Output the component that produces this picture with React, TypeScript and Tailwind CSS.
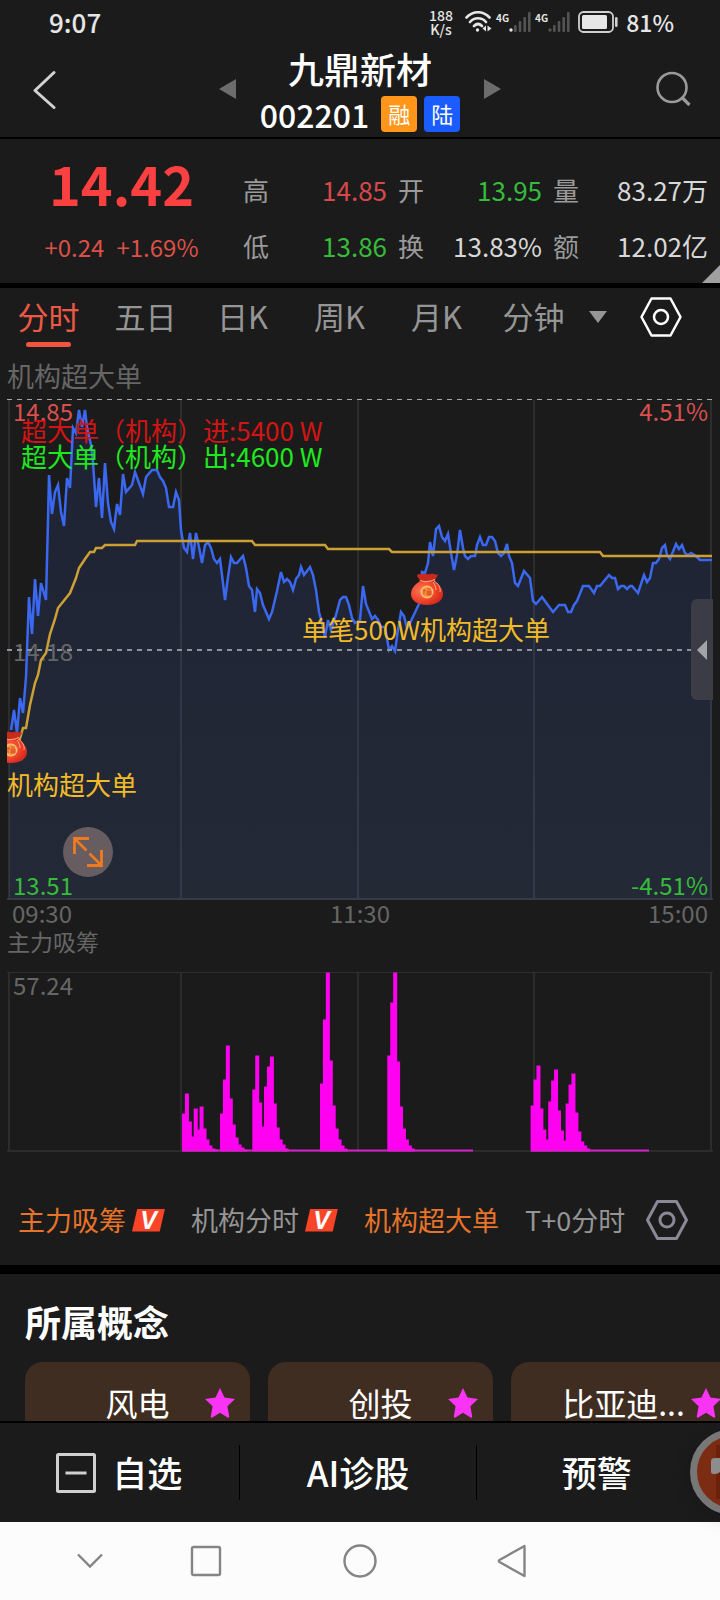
import React from "react";

const PRICE_LINE =
  "11,730 14,710 17,733 20,698 23,713 26,677 29,597 32,634 35,579 38,616 41,583 46,600 48,520 49,475 52,514 55,492 58,485 61,512 64,526 67,478 70,488 73,428 76,433 79,410 82,427 85,410 87,427 91,445 93,462 96,507 99,478 102,518 105,463 108,503 111,522 114,529 117,504 120,515 123,474 126,492 132,485 135,472 143,494 146,477 152,470 157,470 160,477 163,481 166,488 169,507 173,507 176,492 179,500 181,530 184,548 187,552 190,533 193,559 196,533 199,547 202,563 205,545 208,542 211,548 214,559 217,563 220,559 222,575 225,600 228,577 231,557 234,563 237,563 243,556 246,568 249,586 252,590 255,612 257,589 260,593 263,605 269,619 272,612 277,591 281,572 284,582 287,579 290,582 293,590 296,579 299,575 301,567 304,575 310,567 313,575 316,590 319,612 322,623 325,637 328,620 331,630 336,615 340,600 343,597 346,597 349,605 352,618 355,623 360,620 363,586 366,604 372,619 375,616 378,620 381,627 385,627 389,650 392,646 395,651 398,630 401,612 404,616 407,628 410,623 419,604 422,572 425,573 428,563 430,542 433,556 436,529 439,526 442,537 445,541 448,534 451,553 454,570 457,555 460,530 463,548 465,556 468,559 471,556 475,556 477,545 480,537 483,545 486,545 489,537 492,537 495,541 498,553 501,556 504,553 507,544 509,556 512,563 515,583 518,586 524,571 530,578 533,601 536,604 542,597 553,612 559,605 565,605 568,612 571,612 574,605 577,601 583,586 589,586 594,593 597,586 600,586 609,575 612,578 615,578 618,589 621,586 624,586 627,589 630,586 632,586 638,593 644,575 647,582 650,578 653,563 656,563 659,559 662,548 665,545 667,555 670,559 676,544 679,549 682,545 685,553 688,555 691,553 696,556 700,560 712,560";

const AVERAGE_LINE =
  "19,742 21,735 23,728 26,728 30,705 35,683 38,675 41,660 46,653 50,634 55,619 58,608 70,593 76,578 79,568 85,559 90,552 94,552 96,548 102,548 105,545 135,545 137,541 252,541 255,545 325,545 328,549 389,549 392,552 600,552 603,556 712,556";

const GRID_X = [9, 181, 358, 534, 711];

const BAR_STEP = 2.93;
const BAR_GROUPS = [
  { x: 182, heights: [38, 58, 30, 15, 43, 22, 45, 23, 12, 6, 3, 2] },
  { x: 220, heights: [38, 72, 106, 53, 27, 14, 7, 4, 2] },
  { x: 252.3, heights: [62, 96, 49, 25, 65, 85, 95, 48, 24, 12, 7, 3] },
  { x: 320, heights: [68, 132, 179, 91, 46, 23, 12, 6, 3] },
  { x: 387.3, heights: [96, 149, 179, 90, 45, 23, 12, 6, 3] },
  { x: 530.6, heights: [46, 72, 86, 43, 22, 12] },
  { x: 548.2, heights: [50, 71, 82, 41, 21, 11] },
  { x: 565.6, heights: [48, 67, 78, 39, 20, 10, 6, 3] },
];

const STATS = [
  ["高", "14.85", "text-[#d8484a]"],
  ["开", "13.95", "text-[#37bb3b]"],
  ["量", "83.27万", "text-[#d8d8d8]"],
  ["低", "13.86", "text-[#37bb3b]"],
  ["换", "13.83%", "text-[#d8d8d8]"],
  ["额", "12.02亿", "text-[#d8d8d8]"],
];

function Hexagon({ className }: { className: string }) {
  return (
    <svg viewBox="0 0 42 40" className={className} fill="none" stroke="currentColor" strokeLinejoin="round">
      <path d="M11.5 1.5h19L40.5 20l-10 18.5h-19L1.5 20z" />
      <circle cx="21" cy="20" r="7" />
    </svg>
  );
}

function Signal({ dot }: { dot: string }) {
  return (
    <span className="flex items-start">
      <span className="text-[10px] font-bold leading-3">4G</span>
      <svg viewBox="0 0 22 20" className="h-5 w-[22px]" fill="#545454">
        <circle cx="2" cy="18" r="1.7" fill={dot} />
        <rect x="5" y="13" width="2.6" height="7" rx="1" />
        <rect x="9.700" y="9" width="2.600" height="11" rx="1" />
        <rect x="14.400" y="5" width="2.600" height="15" rx="1" />
        <rect x="19" y="0" width="2.600" height="20" rx="1" />
      </svg>
    </span>
  );
}

function StatusBar() {
  return (
    <div className="flex h-[46px] items-center justify-between pb-0.5 pl-[49px] pr-[46px] text-[#e6e6e6]">
      <span className="text-[26px] font-medium leading-10">9:07</span>
      <div className="flex h-6 items-center">
        <span className="mr-3 text-center text-[14px] font-medium leading-[14px]">
          188
          <br />
          K/s
        </span>
        <svg viewBox="0 0 27 22" className="mr-1 h-[22px] w-[27px]" fill="none" stroke="currentColor" strokeWidth="2.600" strokeLinecap="round">
          <path d="M1.500 6.500C8-.5 18-.5 24.500 6.500M5 11c4.500-5 11.500-5 16 0M9 15c2.500-2.500 5.500-2.500 8 0" />
          <circle cx="12.500" cy="19" r="1.700" fill="currentColor" stroke="none" />
          <path d="M21 14.500v6l-3.500-3zM22.500 14.500v6l4-3z" fill="currentColor" stroke="none" />
        </svg>
        <span className="mr-1">
          <Signal dot="#e6e6e6" />
        </span>
        <Signal dot="#545454" />
        <svg viewBox="0 0 40 22" className="ml-2 mr-2 h-[22px] w-10" fill="none">
          <rect x="1" y="1" width="34" height="20" rx="4.500" stroke="#d0d0d0" strokeWidth="1.800" />
          <rect x="4" y="4" width="25" height="14" rx="1.500" fill="#e6e6e6" />
          <rect x="37" y="6" width="2.600" height="10" rx="1.300" fill="#d0d0d0" />
        </svg>
        <span className="text-[23px] font-medium leading-6">81%</span>
      </div>
    </div>
  );
}

function Header() {
  return (
    <header className="grid grid-cols-[1fr_auto_1fr] items-center border-b-2 border-black pb-[5px]">
      <button aria-label="返回" className="ml-8 justify-self-start">
        <svg viewBox="0 0 24 40" className="h-10 w-6" fill="none" stroke="#d2d2d2" strokeWidth="3">
          <path d="M22 3.500 3 21.500l19 17" strokeLinecap="round" strokeLinejoin="round" />
        </svg>
      </button>
      <div className="flex items-center gap-6">
        <button aria-label="上一只">
          <svg viewBox="0 0 17 20" className="h-5 w-[17px]" fill="#6c6c6c">
            <path d="M0 10 17 0v20z" />
          </svg>
        </button>
        <div className="flex flex-col items-center gap-[5px] text-white">
          <h1 className="text-[36px] font-medium leading-[45px]">九鼎新材</h1>
          <div className="flex items-center text-[22px] leading-[35px]">
            <span className="mr-3 text-[32px] font-medium">002201</span>
            <span className="mr-[7px] h-9 w-9 rounded bg-[#ff9519] text-center">融</span>
            <span className="h-9 w-9 rounded bg-[#1a5cff] text-center">陆</span>
          </div>
        </div>
        <button aria-label="下一只">
          <svg viewBox="0 0 17 20" className="h-5 w-[17px]" fill="#6c6c6c">
            <path d="M17 10 0 0v20z" />
          </svg>
        </button>
      </div>
      <button aria-label="搜索" className="mr-7 justify-self-end">
        <svg viewBox="0 0 36 36" className="h-9 w-9" fill="none" stroke="#9a9a9a" strokeWidth="2.600">
          <circle cx="16" cy="16.500" r="14.500" />
          <path d="m26 26.500 7.500 7.500" strokeWidth="3.200" />
        </svg>
      </button>
    </header>
  );
}

function Quote() {
  return (
    <section className="relative flex h-[149px] border-b-[5px] border-black">
      <div className="w-[243px] text-center">
        <div className="mt-2.5 text-[54px] font-bold leading-[68px] text-[#fa4040]">14.42</div>
        <div className="mt-3 flex justify-center gap-3 text-[24px] leading-9 text-[#dc5048]">
          <span>+0.24</span>
          <span>+1.69%</span>
        </div>
      </div>
      <dl className="mt-[31px] grid flex-1 grid-cols-[144fr_144fr_155fr] content-start gap-x-[11px] gap-y-4 pr-3 text-[26px] leading-10">
        {STATS.map(([label, value, color]) => (
          <div key={label} className="flex justify-between whitespace-nowrap">
            <dt className="text-[#9a9a9a]">{label}</dt>
            <dd className={color}>{value}</dd>
          </div>
        ))}
      </dl>
      <svg viewBox="0 0 18 18" className="absolute bottom-0 right-0 h-[18px] w-[18px]" fill="#a0a0a0">
        <path d="M0 18 18 0v18z" />
      </svg>
    </section>
  );
}

function Tabs() {
  return (
    <nav className="flex h-[66px] items-start text-[31px] leading-[56px] text-[#959595]">
      <div className="grid flex-1 grid-cols-6">
        <button className="flex flex-col items-center text-[#ee5945]">
          <span className="h-[54px]">分时</span>
          <span className="h-[5px] w-[45px] rounded-full bg-[#f2543f]" />
        </button>
        {["五日", "日K", "周K", "月K", "分钟"].map((tab) => (
          <button key={tab} className="h-14 text-center">
            {tab}
          </button>
        ))}
      </div>
      <div className="flex h-[58px] w-[138px] items-center">
        <svg viewBox="0 0 18 12" className="ml-[7px] h-3 w-[18px]" fill="#959595">
          <path d="M0 0h18L9 12z" />
        </svg>
        <button aria-label="图表设置" className="ml-[33px] text-white">
          <Hexagon className="h-10 w-[42px] stroke-[2.500px]" />
        </button>
      </div>
    </nav>
  );
}

function MoneyBag({ x, y }: { x: number; y: number }) {
  return (
    <g transform={`translate(${x} ${y})`}>
      <path d="M9 8C3 12 0 16 0 21c0 7 7 11 16 11s16-4 16-11c0-5-3-9-9-13z" fill="url(#bag)" />
      <path d="M7 1c3 1 5-1 8 0s6-1 8 0 3 0 4 1l-4 7H10L6 3z" fill="#c92a1e" />
      <path d="M9 7.500c4 1.500 10 1.500 15-1" stroke="#ff9a70" strokeWidth="1.300" fill="none" />
      <path d="M23 8c4 2 7 7 6 11M22 9c2 3 3 5 3 8" stroke="#ffb27c" strokeWidth="1" fill="none" />
      <circle cx="16" cy="19" r="6.500" fill="#ffc26b" />
      <circle cx="16" cy="19" r="5" fill="#f8953f" />
      <path d="M13 16v6M12.500 17.500h2.500M16 16h4M16 18h4v4h-4zM16 20h4M18 18v4" stroke="#d9482a" strokeWidth="0.900" fill="none" />
    </g>
  );
}

function PriceChart() {
  return (
    <div className="relative">
      <svg viewBox="7 399 706 501" className="block w-full text-[24px]">
        <defs>
          <linearGradient id="area" x1="0" y1="0" x2="0" y2="1">
            <stop offset="0" stopColor="#2f5bd8" stopOpacity="0.130" />
            <stop offset="1" stopColor="#4a70b8" stopOpacity="0.170" />
          </linearGradient>
          <radialGradient id="bag" cx="0.350" cy="0.400" r="0.750">
            <stop offset="0" stopColor="#ff7a5c" />
            <stop offset="0.600" stopColor="#ee4029" />
            <stop offset="1" stopColor="#c9221a" />
          </radialGradient>
        </defs>
        <polygon points={`9,899 9,740 ${PRICE_LINE} 712,899`} fill="url(#area)" />
        {GRID_X.map((x) => (
          <line key={x} x1={x} x2={x} y1="400" y2="899" stroke="#8c92a0" strokeOpacity="0.160" strokeWidth="2" />
        ))}
        <line x1="7" x2="713" y1="899" y2="899" stroke="#343a46" strokeWidth="2" />
        <text x="13" y="661" fill="#666666">14.18</text>
        <text x="13" y="421" fill="#d8504e">14.85</text>
        <polyline points={PRICE_LINE} fill="none" stroke="#3b68f0" strokeWidth="2.500" />
        <polyline points={AVERAGE_LINE} fill="none" stroke="#cda034" strokeWidth="2.500" />
        <line x1="7" x2="713" y1="399.500" y2="399.500" stroke="#a8a8a8" strokeDasharray="5 5" />
        <line x1="7" x2="713" y1="650" y2="650" stroke="#8f939c" strokeWidth="2" strokeDasharray="5 5" />
        <text x="708" y="421" textAnchor="end" fill="#d8504e">4.51%</text>
        <text x="13" y="895" fill="#37bb3b">13.51</text>
        <text x="708" y="895" textAnchor="end" fill="#37bb3b">-4.51%</text>
        <MoneyBag x={411} y={573} />
        <MoneyBag x={-5} y={731} />
        <g className="text-[26px]">
          <text x="21" y="441" fill="#d21414">超大单（机构）进:5400 W</text>
          <text x="21" y="467" fill="#1fe81f">超大单（机构）出:4600 W</text>
          <text x="302" y="640" fill="#f2bb27">单笔500W机构超大单</text>
          <text x="7" y="795" fill="#f2bb27">机构超大单</text>
        </g>
      </svg>
      <button aria-label="全屏" className="absolute bottom-[23px] left-14 flex h-[50px] w-[50px] items-center justify-center rounded-full bg-[#675d60]">
        <svg viewBox="0 0 32 32" className="h-8 w-8" fill="none" stroke="#ee7a22" strokeWidth="2.800">
          <path d="M17 2.500H2.500V18M2.500 2.500l12 12M15 29.500h14.500V14M29.500 29.500l-12-12" />
        </svg>
      </button>
      <button aria-label="展开侧栏" className="absolute bottom-[200px] right-0 flex h-[101px] w-[22px] items-center justify-center rounded-l-md bg-[#3b3c45]">
        <svg viewBox="0 0 10 20" className="h-5 w-2.5" fill="#a3a3a8">
          <path d="M0 10 10 0v20z" />
        </svg>
      </button>
    </div>
  );
}

function VolumeChart() {
  return (
    <svg viewBox="7 972 706 180" className="mt-4 block w-full text-[24px]">
      {GRID_X.map((x) => (
        <line key={x} x1={x} x2={x} y1="972" y2="1151" stroke="#2c2c2c" strokeWidth="2" />
      ))}
      <line x1="7" x2="713" y1="972.500" y2="972.500" stroke="#2c2c2c" />
      <line x1="7" x2="713" y1="1151" y2="1151" stroke="#2c2c2c" strokeWidth="2" />
      <g fill="#ff00f0">
        {BAR_GROUPS.map((group) =>
          group.heights.map((h, i) => (
            <rect key={`${group.x}-${i}`} x={group.x + i * BAR_STEP} y={1151.5 - h} width="4" height={h} />
          )),
        )}
      </g>
      <path d="M182 1150.500h291M531 1150.500h118" stroke="#d81ecb" strokeWidth="2" />
      <text x="13" y="995" fill="#666666">57.24</text>
    </svg>
  );
}

function VipMark() {
  return (
    <span className="ml-1.5 flex h-[23px] w-[33px] items-center justify-center bg-[#fa4428] font-['Liberation_Sans'] text-[25px] font-bold italic leading-[23px] text-white [clip-path:polygon(16%_0,100%_0,84%_100%,0_100%)]">
      V
    </span>
  );
}

function IndicatorBar() {
  return (
    <div className="mt-12 flex items-center pb-[25px] pl-[11px] text-[27px] leading-10 text-[#959595]">
      <div className="flex flex-1 items-center gap-[26px] overflow-hidden whitespace-nowrap">
        <button className="flex items-center text-[#e8742a]">
          主力吸筹
          <VipMark />
        </button>
        <button className="flex items-center">
          机构分时
          <VipMark />
        </button>
        <button className="text-[#e8742a]">机构超大单</button>
        <button>T+0分时</button>
      </div>
      <button aria-label="指标设置" className="mr-[25px] text-[#8b8997]">
        <Hexagon className="h-10 w-[42px] stroke-3" />
      </button>
    </div>
  );
}

function Concepts() {
  return (
    <section className="border-t-[9px] border-black pt-[23px]">
      <h2 className="pl-[25px] text-[36px] font-bold leading-[48px] text-white">所属概念</h2>
      <div className="mt-[17px] flex gap-[18px] overflow-hidden pl-[25px]">
        {["风电", "创投", "比亚迪..."].map((name) => (
          <a
            key={name}
            href="#concept"
            className="relative h-[120px] w-[225px] shrink-0 rounded-[18px] bg-[#3f2d22] pt-4 text-center text-[32px] leading-[48px] text-white"
          >
            {name}
            <svg viewBox="0 0 28 28" className="absolute right-[15px] top-[26px] h-[30px] w-[30px]" fill="#f934f5">
              <path d="M14 0l4.200 8.900 9.800 1.300-7.100 6.800 1.700 9.700a1 1 0 0 1-1.500.8L14 23.200l-7.100 4.300a1 1 0 0 1-1.500-.8L7.100 17 0 10.200l9.800-1.300z" />
            </svg>
          </a>
        ))}
      </div>
    </section>
  );
}

function ActionBar() {
  return (
    <div className="relative z-10 grid grid-cols-3 border-t-2 border-black bg-[#1b1b1b] pr-1 text-[35px] font-medium text-white">
      <button className="flex h-[99px] items-center justify-center gap-4">
        <svg viewBox="0 0 40 40" className="h-10 w-10" fill="none" stroke="#d0d0d0" strokeWidth="3">
          <rect x="1.500" y="1.500" width="37" height="37" rx="1" />
          <path d="M9.500 20h21" />
        </svg>
        自选
      </button>
      <button className="my-[22px] border-x border-black">AI诊股</button>
      <button>预警</button>
      <button aria-label="悬浮助手" className="absolute -right-14 top-1.5 h-[86px] w-[86px] rounded-full shadow-[0_4px_20px_rgba(0,0,0,0.15)]">
        <svg viewBox="0 0 86 86" className="h-full w-full">
          <circle cx="43" cy="43" r="39.500" fill="#7c2c12" stroke="#777777" strokeWidth="7" />
          <path d="M26 16h34v54H26z" fill="#6b200c" />
          <path d="M21 43V32q0-3 4-3h31v15c-8 0-9-5-16-5-8 0-10 6-15 6q-4 0-4-2z" fill="#8d8d8d" />
        </svg>
      </button>
    </div>
  );
}

function SystemNav() {
  return (
    <nav className="grid h-[78px] grid-cols-[84fr_148fr_160fr_144fr_136fr] place-items-center bg-[#fcfcfc] pl-12">
      <button aria-label="收起">
        <svg viewBox="0 0 26 16" className="h-4 w-[26px]" fill="none" stroke="#858585" strokeWidth="2.400">
          <path d="m1 1.500 12 12 12-12" />
        </svg>
      </button>
      <button aria-label="最近任务">
        <svg viewBox="0 0 32 32" className="h-8 w-8" fill="none" stroke="#858585" strokeWidth="2.400">
          <rect x="2" y="2" width="28" height="28" rx="1.500" />
        </svg>
      </button>
      <button aria-label="主页">
        <svg viewBox="0 0 34 34" className="h-[34px] w-[34px]" fill="none" stroke="#858585" strokeWidth="2.400">
          <circle cx="17" cy="17" r="15.500" />
        </svg>
      </button>
      <button aria-label="后退">
        <svg viewBox="0 0 30 34" className="h-[34px] w-[30px]" fill="none" stroke="#858585" strokeWidth="2.400" strokeLinejoin="round">
          <path d="M27.500 2v30L2.500 18q-1.500-1 0-2z" />
        </svg>
      </button>
    </nav>
  );
}

export default function App() {
  return (
    <div className="flex h-screen flex-col overflow-hidden bg-[#1b1b1b] font-['Noto_Sans_CJK_SC',sans-serif]">
      <StatusBar />
      <Header />
      <main className="min-h-0 flex-1 overflow-hidden">
        <Quote />
        <Tabs />
        <section className="px-[7px]">
          <h2 className="h-[45px] text-[27px] leading-[43px] text-[#666666]">机构超大单</h2>
          <PriceChart />
          <div className="grid grid-cols-3 px-[5px] text-[24px] leading-[26px] text-[#666666]">
            <span>09:30</span>
            <span className="text-center">11:30</span>
            <span className="text-right">15:00</span>
          </div>
          <h2 className="text-[23px] leading-[30px] text-[#666666]">主力吸筹</h2>
          <VolumeChart />
          <IndicatorBar />
        </section>
        <Concepts />
      </main>
      <ActionBar />
      <SystemNav />
    </div>
  );
}
